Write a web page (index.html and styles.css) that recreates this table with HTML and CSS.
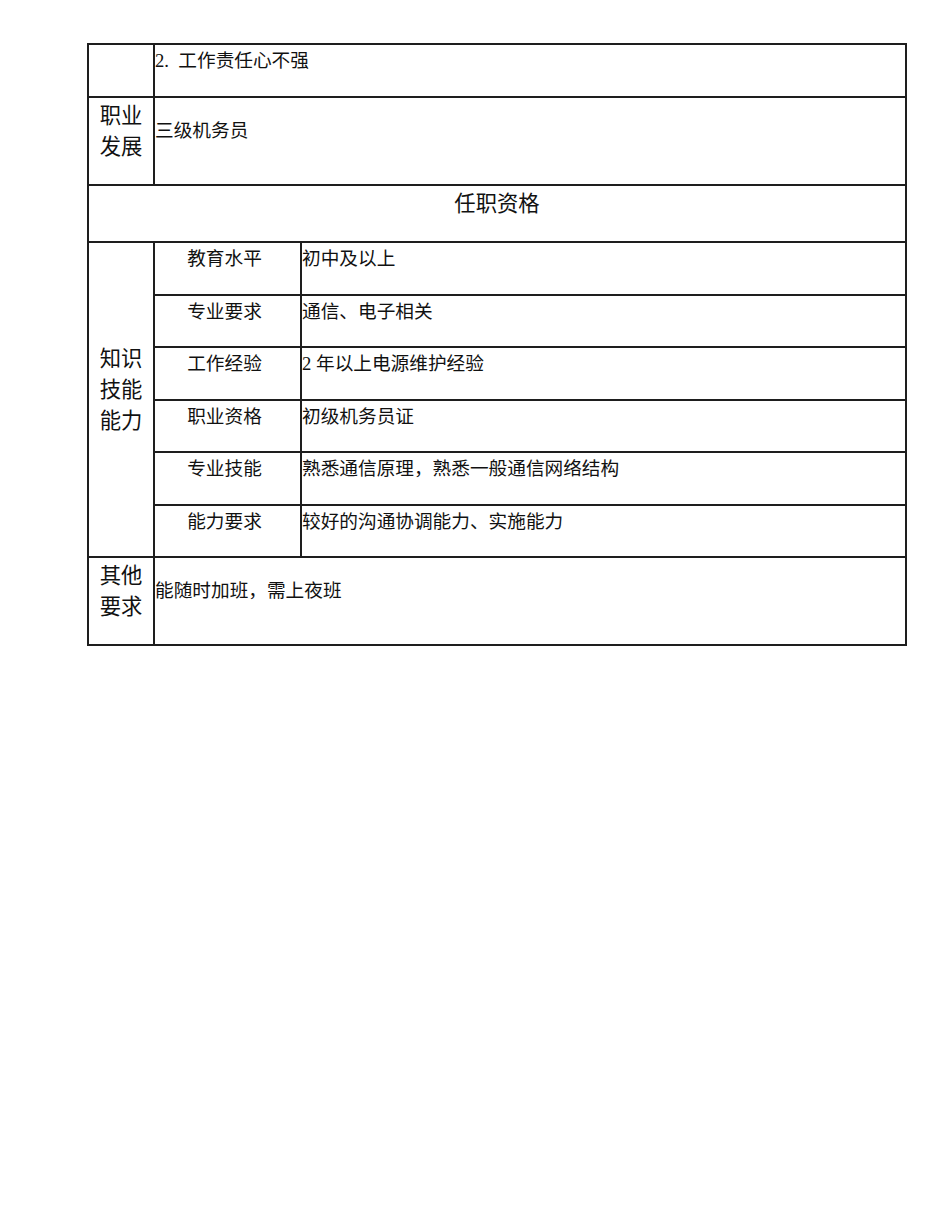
FILE: index.html
```html
<!DOCTYPE html>
<html lang="zh">
<head>
<meta charset="utf-8">
<title>任职资格</title>
<link rel="stylesheet" href="styles.css">
</head>
<body>
<div class="sheet">
  <div class="cell c1 r1"></div>
  <div class="cell c23 r1 text top">2.&nbsp; 工作责任心不强</div>

  <div class="cell c1 r2 label">职业<br>发展</div>
  <div class="cell c23 r2 text mid">三级机务员</div>

  <div class="cell c123 r3 header">任职资格</div>

  <div class="cell c1 rk label knowledge">知识<br>技能<br>能力</div>
  <div class="cell c2 r4 sub">教育水平</div>
  <div class="cell c3 r4 text top">初中及以上</div>
  <div class="cell c2 r5 sub">专业要求</div>
  <div class="cell c3 r5 text top">通信、电子相关</div>
  <div class="cell c2 r6 sub">工作经验</div>
  <div class="cell c3 r6 text top">2 年以上电源维护经验</div>
  <div class="cell c2 r7 sub">职业资格</div>
  <div class="cell c3 r7 text top">初级机务员证</div>
  <div class="cell c2 r8 sub">专业技能</div>
  <div class="cell c3 r8 text top">熟悉通信原理，熟悉一般通信网络结构</div>
  <div class="cell c2 r9 sub">能力要求</div>
  <div class="cell c3 r9 text top">较好的沟通协调能力、实施能力</div>

  <div class="cell c1 r10 label">其他<br>要求</div>
  <div class="cell c23 r10 text mid">能随时加班，需上夜班</div>
</div>
</body>
</html>
```

FILE: styles.css
```css
html, body {
  margin: 0;
  padding: 0;
  background: #ffffff;
}

body {
  font-family: "Liberation Serif", "Noto Sans CJK SC", serif;
  color: #111111;
}

.sheet {
  margin: 43px 0 0 87px;
  width: 820px;
  box-sizing: border-box;
  display: grid;
  grid-template-columns: 66px 147px 605px;
  grid-template-rows: 53px 88px 57px 53px 52px 53px 52px 53px 52px 88px;
  border-top: 2px solid #1e1e1e;
  border-left: 2px solid #1e1e1e;
}

.cell {
  box-sizing: border-box;
  border-right: 2px solid #1e1e1e;
  border-bottom: 2px solid #1e1e1e;
  min-width: 0;
}

.c1 { grid-column: 1; }
.c2 { grid-column: 2; }
.c3 { grid-column: 3; }
.c23 { grid-column: 2 / 4; }
.c123 { grid-column: 1 / 4; }

.r1 { grid-row: 1; }
.r2 { grid-row: 2; }
.r3 { grid-row: 3; }
.r4 { grid-row: 4; }
.r5 { grid-row: 5; }
.r6 { grid-row: 6; }
.r7 { grid-row: 7; }
.r8 { grid-row: 8; }
.r9 { grid-row: 9; }
.r10 { grid-row: 10; }
.rk { grid-row: 4 / 10; }

.text {
  font-size: 18.67px;
  line-height: 24px;
  padding-left: 0;
  white-space: nowrap;
}

.text.top { padding-top: 4px; }
.text.mid { padding-top: 21px; }

.label {
  font-size: 21.33px;
  line-height: 31px;
  text-align: center;
  padding-top: 3px;
  white-space: nowrap;
}

.knowledge {
  display: flex;
  align-items: center;
  justify-content: center;
  padding-top: 0;
  padding-bottom: 19px;
}

.header {
  font-size: 21.33px;
  line-height: 31px;
  text-align: center;
  padding-top: 3px;
}

.sub {
  font-size: 18.67px;
  line-height: 24px;
  text-align: center;
  padding-top: 4px;
  padding-right: 6px;
  white-space: nowrap;
}
```
